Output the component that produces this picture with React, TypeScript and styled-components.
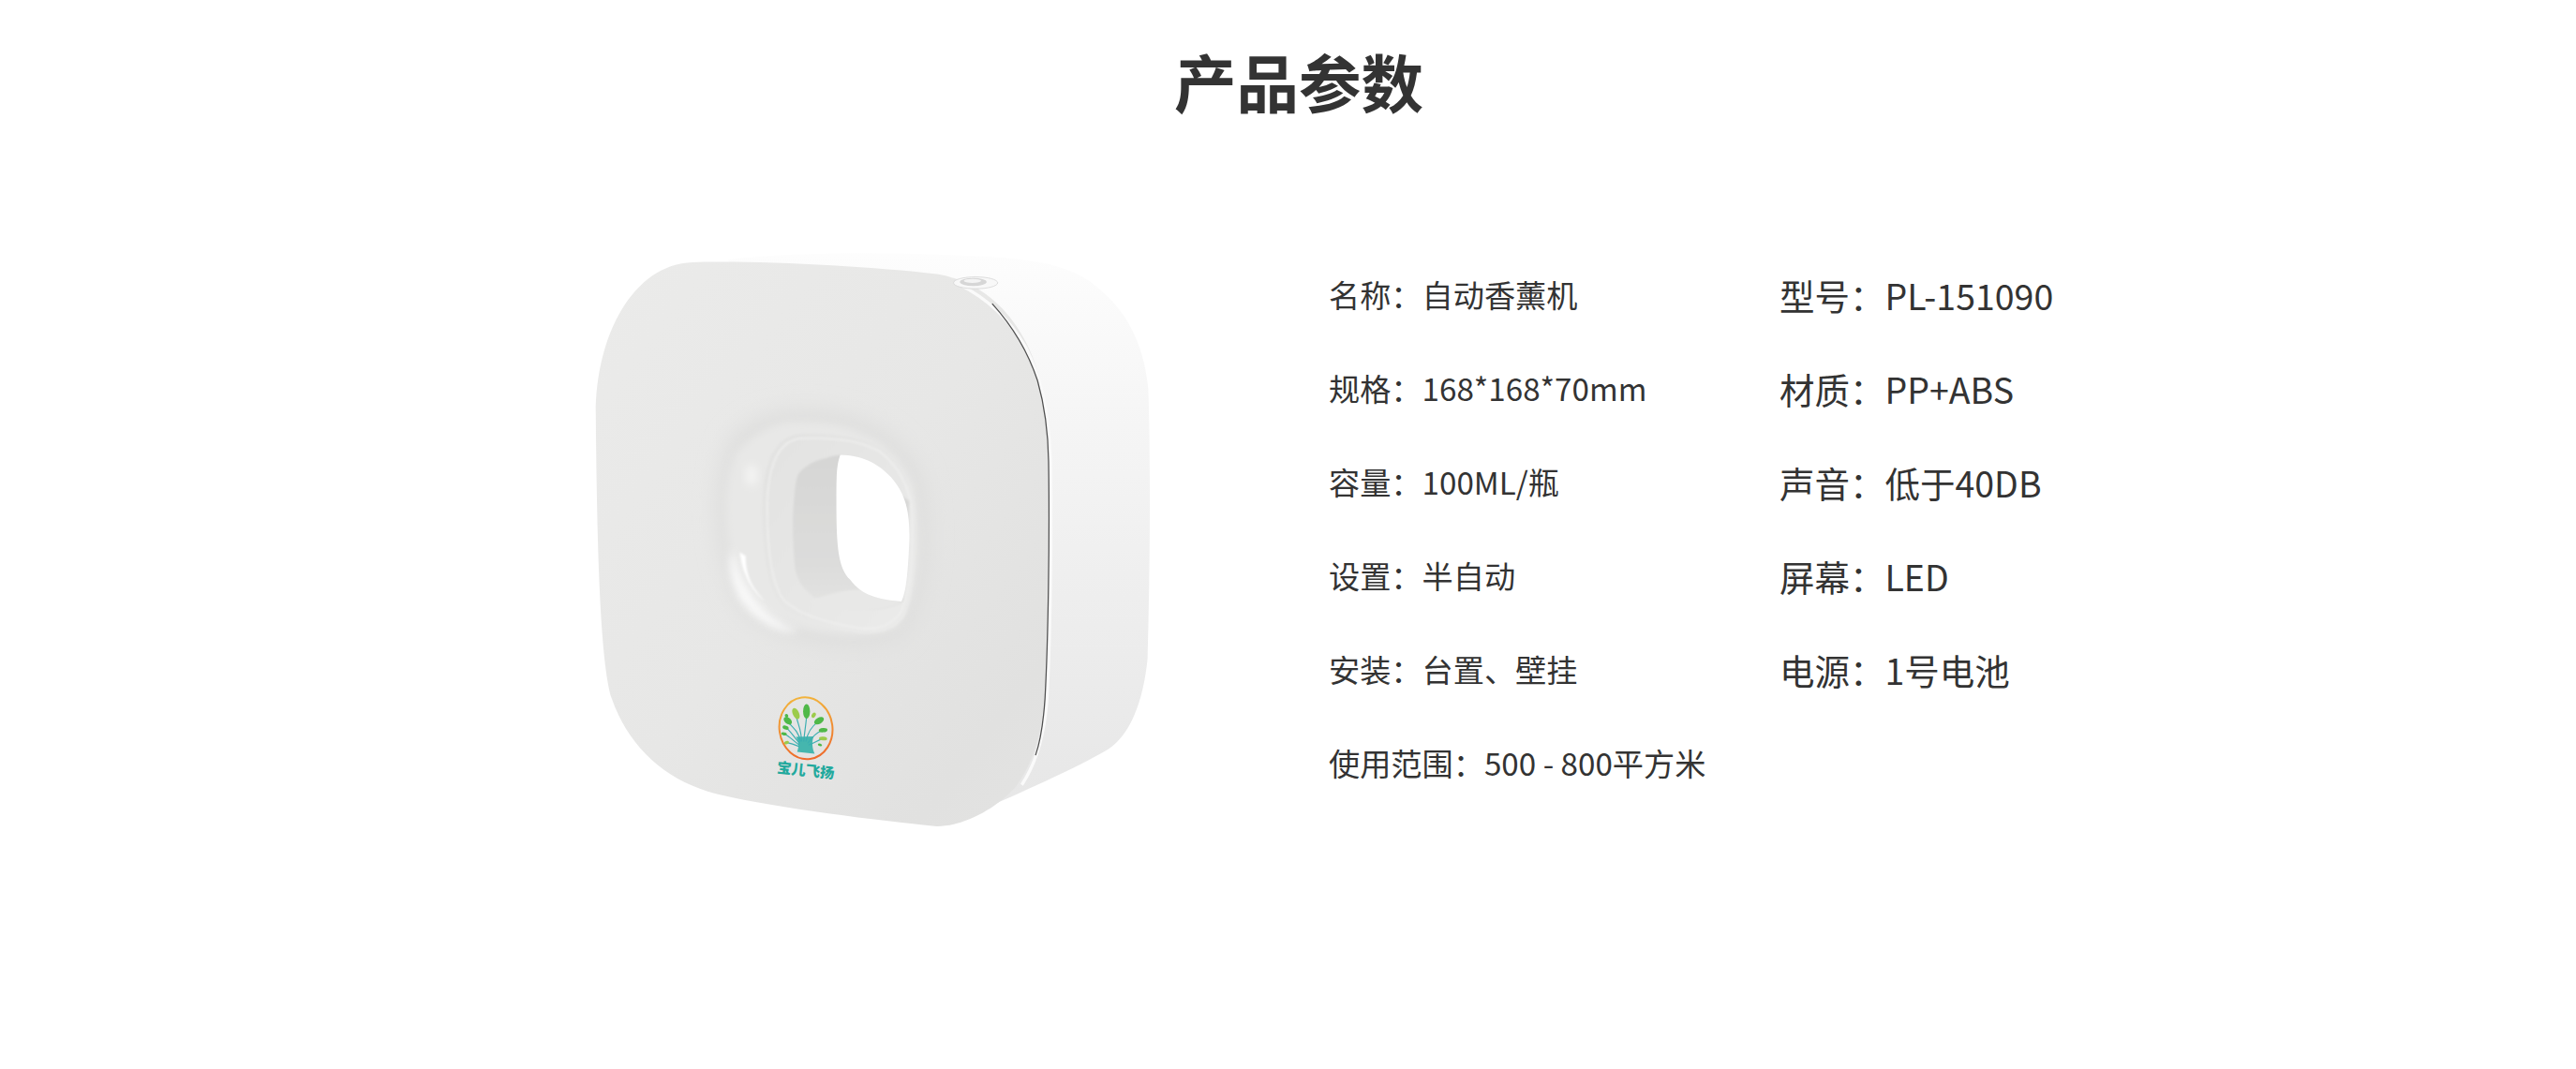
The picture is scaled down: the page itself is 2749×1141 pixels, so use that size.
import * as React from "react";
import styled, { createGlobalStyle } from "styled-components";

const GlobalStyle = createGlobalStyle`
  html, body {
    margin: 0;
    padding: 0;
    background: #fff;
  }
  body {
    font-family: "Noto Sans CJK SC", "Noto Sans", sans-serif;
    color: #333;
  }
`;

const Page = styled.div`
  width: 2749px;
  height: 1141px;
  overflow: hidden;
  display: flex;
  flex-direction: column;
`;

const Title = styled.h1`
  margin: 0;
  padding: 38px 0 0 23px;
  height: 240px;
  box-sizing: border-box;
  text-align: center;
  font-size: 66.5px;
  line-height: 96px;
  font-weight: 700;
  color: #333;
`;

const Content = styled.div`
  display: flex;
  align-items: flex-start;
  padding-left: 600px;
  gap: 158px;
`;

const ProductShot = styled.svg`
  display: block;
  width: 660px;
  height: 660px;
  flex: none;
`;

const SpecGrid = styled.div`
  display: grid;
  grid-template-columns: 481px auto;
  grid-auto-rows: 100px;
  padding-top: 23px;
`;

const SpecCell = styled.div<{ $large?: boolean }>`
  display: flex;
  align-items: center;
  white-space: nowrap;
  font-size: ${(p) => (p.$large ? "37.5px" : "33.2px")};
  padding-top: ${(p) => (p.$large ? "2px" : "0")};
  color: #333;
`;

const specs = [
  ["名称：自动香薰机", "型号：PL-151090"],
  ["规格：168*168*70mm", "材质：PP+ABS"],
  ["容量：100ML/瓶", "声音：低于40DB"],
  ["设置：半自动", "屏幕：LED"],
  ["安装：台置、壁挂", "电源：1号电池"],
  ["使用范围：500 - 800平方米", ""],
];

const leaves = [
  [152, 88, 11, 23, 0],
  [118, 95, 10, 19, -25],
  [92, 118, 10, 15, -50],
  [88, 102, 5, 6, -30],
  [175, 100, 6, 9, 30],
  [192, 118, 10, 17, 60],
  [205, 148, 7, 14, 85],
  [205, 175, 6, 13, 95],
  [85, 140, 6, 10, -70],
  [80, 160, 5, 9, -80],
  [88, 188, 5, 8, -110],
  [195, 195, 4, 7, 110],
];

const branches = [
  "M132 185 C130 160 115 145 92 122",
  "M136 185 C136 150 125 130 120 108",
  "M143 185 C146 150 150 130 152 105",
  "M150 185 C155 155 170 135 188 122",
  "M156 190 C170 170 185 155 200 150",
  "M158 196 C175 190 190 180 202 176",
  "M130 190 C115 175 100 150 88 142",
  "M128 195 C112 185 98 168 84 162",
  "M127 200 C115 195 100 190 90 188",
];

function Product() {
  return (
    <ProductShot viewBox="0 0 1568 1568">
      <defs>
        <linearGradient id="sideFill" x1="0" y1="0" x2="0" y2="1">
          <stop offset="0" stopColor="#fdfdfd" />
          <stop offset="0.3" stopColor="#f5f5f5" />
          <stop offset="0.6" stopColor="#eeeeee" />
          <stop offset="1" stopColor="#e6e6e6" />
        </linearGradient>
        <linearGradient id="faceFill" x1="0" y1="0" x2="1" y2="1">
          <stop offset="0" stopColor="#ebebea" />
          <stop offset="0.5" stopColor="#e7e7e6" />
          <stop offset="0.85" stopColor="#e1e1e0" />
          <stop offset="1" stopColor="#e3e3e2" />
        </linearGradient>
        <linearGradient id="rimFill" x1="0" y1="0" x2="1" y2="1">
          <stop offset="0" stopColor="#e2e2e1" />
          <stop offset="1" stopColor="#ebebea" />
        </linearGradient>
        <linearGradient id="tunnelFill" x1="0" y1="0" x2="0" y2="1">
          <stop offset="0" stopColor="#d6d6d5" />
          <stop offset="0.7" stopColor="#dcdcdb" />
          <stop offset="1" stopColor="#e4e4e3" />
        </linearGradient>
        <linearGradient id="ringStroke" x1="0" y1="0" x2="0" y2="1">
          <stop offset="0" stopColor="#f2b33c" />
          <stop offset="1" stopColor="#ee6a2a" />
        </linearGradient>
        <filter id="blurWide" x="-30%" y="-30%" width="160%" height="160%">
          <feGaussianBlur stdDeviation="26" />
        </filter>
        <filter id="blurMid" x="-30%" y="-30%" width="160%" height="160%">
          <feGaussianBlur stdDeviation="10" />
        </filter>
        <filter id="blurSoft" x="-10%" y="-10%" width="120%" height="120%">
          <feGaussianBlur stdDeviation="2" />
        </filter>
        <clipPath id="faceClip">
          <path d="M330 95 C500 90 780 105 950 125 C1040 140 1110 190 1160 270 C1210 350 1232 450 1232 600 C1234 800 1230 1050 1222 1200 C1215 1300 1190 1370 1150 1425 C1100 1480 1020 1525 950 1525 C800 1510 550 1480 400 1445 C270 1415 170 1330 125 1200 C95 1100 88 800 85 480 C85 280 180 100 330 95 Z" />
        </clipPath>
      </defs>

      {/* back shell */}
      <path
        d="M420 88 C600 68 850 68 1100 82 C1220 90 1310 110 1370 170 C1440 230 1478 320 1486 420 C1492 600 1490 900 1484 1100 C1474 1200 1444 1290 1384 1330 C1300 1380 1160 1440 1050 1490 L950 1525 L800 1000 Z"
        fill="url(#sideFill)"
      />

      {/* front face */}
      <path
        d="M330 95 C500 90 780 105 950 125 C1040 140 1110 190 1160 270 C1210 350 1232 450 1232 600 C1234 800 1230 1050 1222 1200 C1215 1300 1190 1370 1150 1425 C1100 1480 1020 1525 950 1525 C800 1510 550 1480 400 1445 C270 1415 170 1330 125 1200 C95 1100 88 800 85 480 C85 280 180 100 330 95 Z"
        fill="url(#faceFill)"
      />

      <g clipPath="url(#faceClip)">
        {/* soft dip around the opening */}
        <path
          d="M560 470 C720 450 870 510 920 650 C945 800 935 970 860 1050 C760 1095 560 1070 460 985 C385 880 370 660 420 550 C460 495 510 480 560 470 Z"
          fill="#dfdfde"
          filter="url(#blurWide)"
        />
        <path
          d="M570 500 C720 490 845 540 890 660 C915 800 905 950 845 1020 C760 1060 575 1040 480 960 C410 870 395 670 440 580 C480 530 525 510 570 500 Z"
          fill="#e8e8e7"
          filter="url(#blurMid)"
        />
        <ellipse cx="480" cy="635" rx="16" ry="28" fill="#f3f3f2" filter="url(#blurMid)" />
        <path
          d="M430 820 C450 900 490 990 600 1030 C560 1040 490 1010 450 950 C425 900 420 860 430 820 Z"
          fill="#ffffff"
          opacity="0.8"
          filter="url(#blurMid)"
        />
        <path d="M450 830 C455 880 480 930 515 955 C490 930 465 900 465 840 Z" fill="#fff" filter="url(#blurSoft)" />
      </g>

      {/* rim of the opening */}
      <path
        d="M600 530 C680 526 760 535 810 565 C860 600 895 660 897 740 C898 830 895 920 872 985 C850 1030 800 1040 750 1035 C680 1025 600 1005 555 965 C515 920 505 800 507 700 C510 620 530 540 600 530 Z"
        fill="url(#rimFill)"
        filter="url(#blurSoft)"
      />
      <path
        d="M600 542 C680 538 755 546 805 575 C850 610 885 665 887 740 C888 830 885 915 862 975 C840 1018 795 1028 750 1022 C685 1012 610 995 565 955 C528 915 518 800 520 700 C523 625 540 552 600 542 Z"
        fill="none"
        stroke="#efefee"
        strokeWidth="4"
        filter="url(#blurSoft)"
      />

      {/* tunnel and through-hole */}
      <path
        d="M705 583 C660 590 610 605 595 640 C582 700 583 800 590 870 C600 925 640 955 700 965 C760 975 820 985 865 955 L880 700 Z"
        fill="url(#tunnelFill)"
        filter="url(#blurSoft)"
      />
      <path d="M620 955 C680 935 720 925 755 925 L860 958 C800 985 680 985 620 955 Z" fill="#e8e8e7" filter="url(#blurSoft)" />
      <path
        d="M705 583 C758 585 796 600 834 640 C868 680 882 720 880 800 C877 870 873 930 860 955 C800 950 760 940 730 900 C700 870 695 820 695 700 C695 640 695 610 705 583 Z"
        fill="#fff"
      />

      {/* seam between face and shell */}
      <path
        d="M1000 150 C1070 185 1130 240 1170 310 C1205 380 1228 460 1233 600 C1236 800 1232 1050 1224 1200 C1218 1290 1200 1360 1160 1420"
        fill="none"
        stroke="#fafafa"
        strokeWidth="8"
        transform="translate(5 0)"
      />
      <path
        d="M1090 200 C1140 255 1180 320 1205 395 C1222 455 1232 520 1233 600 C1236 800 1232 1050 1224 1200 C1220 1260 1212 1310 1200 1345"
        fill="none"
        stroke="#4f4f4f"
        strokeWidth="3"
      />

      {/* top button */}
      <ellipse cx="1048" cy="147" rx="56" ry="15" fill="#f8f8f8" stroke="#d6d6d6" strokeWidth="2" />
      <ellipse cx="1042" cy="145" rx="34" ry="10" fill="#d6d6d6" />
      <ellipse cx="1040" cy="142" rx="22" ry="5" fill="#f4f4f4" />

      {/* logo */}
      <g transform="translate(499 1164) scale(0.792)">
        <ellipse
          cx="150"
          cy="142"
          rx="85"
          ry="99"
          fill="none"
          stroke="url(#ringStroke)"
          strokeWidth="6"
          transform="rotate(-8 150 142)"
        />
        <path d="M122 218 C128 200 128 185 118 170 L175 168 C168 185 170 205 178 224 Z" fill="#45b6ae" />
        {branches.map((d) => (
          <path key={d} d={d} fill="none" stroke="#3aaeb0" strokeWidth="3.5" />
        ))}
        {leaves.map(([x, y, rx, ry, r], i) => (
          <ellipse
            key={i}
            cx={x}
            cy={y}
            rx={rx}
            ry={ry}
            fill={i % 3 === 1 ? "#9ccb4a" : "#4fb848"}
            transform={`rotate(${r} ${x} ${y})`}
          />
        ))}
        <text
          x="56"
          y="284"
          fontSize="46"
          fontWeight="900"
          fontFamily='"Noto Sans CJK SC", sans-serif'
          fill="#22a99d"
          transform="rotate(6 56 284)"
        >
          宝儿飞扬
        </text>
      </g>
    </ProductShot>
  );
}

export default function App() {
  return (
    <Page>
      <GlobalStyle />
      <Title>产品参数</Title>
      <Content>
        <Product />
        <SpecGrid>
          {specs.map(([left, right]) => (
            <React.Fragment key={left}>
              <SpecCell>{left}</SpecCell>
              <SpecCell $large>{right}</SpecCell>
            </React.Fragment>
          ))}
        </SpecGrid>
      </Content>
    </Page>
  );
}
